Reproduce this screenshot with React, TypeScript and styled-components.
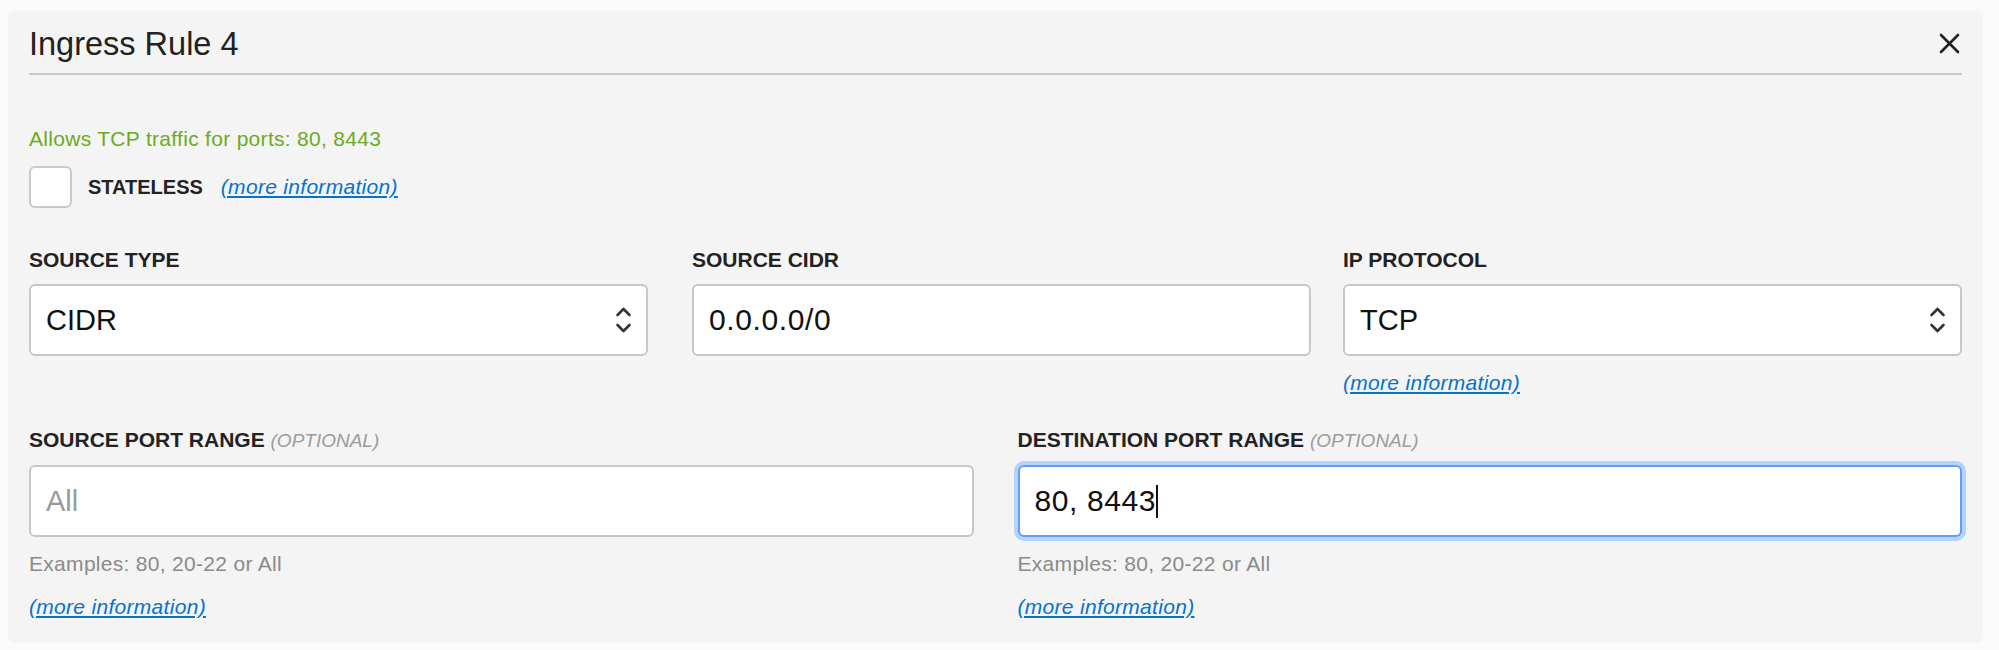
import React from "react";
import styled, { createGlobalStyle, css } from "styled-components";

const GlobalStyle = createGlobalStyle`
  html, body {
    margin: 0;
    padding: 0;
    background: #fafafa;
  }
  body {
    font-family: "Liberation Sans", Arial, Helvetica, sans-serif;
    color: #222;
  }
  * { box-sizing: border-box; }
`;

const Page = styled.div`
  width: 1999px;
  padding: 11px 16px 8px 8px;
`;

const Panel = styled.section`
  background: #f4f4f4;
  border-radius: 6px;
  padding: 0 21px 24px;
`;

const Header = styled.header`
  display: flex;
  align-items: flex-start;
  justify-content: space-between;
  padding: 14px 0 10px;
  border-bottom: 2px solid #c5cad1;
`;

const Title = styled.h2`
  margin: 0;
  font-size: 32.5px;
  line-height: 38px;
  font-weight: 400;
  color: #222;
`;

const CloseButton = styled.button`
  display: flex;
  width: 21px;
  height: 21px;
  margin: 8px 2px 0 0;
  padding: 0;
  border: 0;
  background: none;
  cursor: pointer;
`;

const Status = styled.p`
  margin: 52px 0 0;
  font-size: 21px;
  line-height: 24px;
  letter-spacing: 0.3px;
  color: #6cab20;
`;

const CheckRow = styled.div`
  display: flex;
  align-items: center;
  margin-top: 15px;
`;

const CheckBox = styled.span`
  display: inline-block;
  width: 43px;
  height: 42px;
  background: #fff;
  border: 2px solid #c6cad0;
  border-radius: 6px;
`;

const CheckLabel = styled.span`
  margin: 0 18px 0 16px;
  font-size: 20px;
  line-height: 24px;
  font-weight: 700;
  color: #222;
`;

const MoreLink = styled.a<{ $top?: number }>`
  display: inline-block;
  margin-top: ${(p) => p.$top ?? 0}px;
  font-size: 21px;
  line-height: 24px;
  font-style: italic;
  letter-spacing: 0.3px;
  color: #0572ce;
  text-decoration: underline;
  text-underline-offset: 2px;
  cursor: pointer;
`;

const FieldLink = styled(MoreLink)`
  align-self: flex-start;
`;

const Row = styled.div<{ $top: number; $gap: number }>`
  display: flex;
  align-items: flex-start;
  margin-top: ${(p) => p.$top}px;
  gap: ${(p) => p.$gap}px;
`;

const Field = styled.div<{ $spaceAfter?: number }>`
  flex: 1 1 0;
  min-width: 0;
  display: flex;
  flex-direction: column;
  margin-right: ${(p) => p.$spaceAfter ?? 0}px;
`;

const Label = styled.label`
  display: block;
  margin-bottom: 12px;
  font-size: 21px;
  line-height: 24px;
  font-weight: 700;
  color: #222;
  white-space: nowrap;
`;

const Optional = styled.span`
  font-size: 19px;
  font-weight: 400;
  font-style: italic;
  color: #9c9c9c;
`;

const Box = styled.div<{ $focused?: boolean }>`
  display: flex;
  align-items: center;
  justify-content: space-between;
  height: 72px;
  padding: 0 14px 0 15px;
  background: #fff;
  border: 2px solid #c3c8cf;
  border-radius: 6px;
  font-size: 29px;
  color: #111;
  ${(p) =>
    p.$focused &&
    css`
      border-color: #5f9ff4;
      box-shadow: 0 0 0 4px #b6d4fb;
    `}
`;

const Value = styled.span<{ $placeholder?: boolean; $typed?: boolean }>`
  display: inline-flex;
  align-items: center;
  color: ${(p) => (p.$placeholder ? "#9a9a9a" : "#111")};
  ${(p) =>
    p.$typed &&
    css`
      font-size: 30px;
      letter-spacing: 0.6px;
    `}
`;

const Caret = styled.span`
  display: inline-block;
  width: 2px;
  height: 33px;
  background: #111;
`;

const Hint = styled.p`
  margin: 15px 0 0;
  font-size: 21px;
  line-height: 24px;
  letter-spacing: 0.3px;
  color: #8a8a8a;
`;

const CloseIcon = () => (
  <svg width="21" height="21" viewBox="0 0 21 21" fill="none">
    <path d="M2 2 L19 19 M19 2 L2 19" stroke="#222" strokeWidth="2.6" strokeLinecap="round" />
  </svg>
);

const UpDownIcon = () => (
  <svg width="17" height="30" viewBox="0 0 17 30" fill="none">
    <path
      d="M2.5 10 L8.5 4 L14.5 10 M2.5 20 L8.5 26 L14.5 20"
      stroke="#333"
      strokeWidth="2.6"
      strokeLinecap="round"
      strokeLinejoin="round"
    />
  </svg>
);

const SelectBox = ({ value }: { value: string }) => (
  <Box>
    <Value>{value}</Value>
    <UpDownIcon />
  </Box>
);

export default function App() {
  return (
    <>
      <GlobalStyle />
      <Page>
        <Panel>
          <Header>
            <Title>Ingress Rule 4</Title>
            <CloseButton aria-label="Close">
              <CloseIcon />
            </CloseButton>
          </Header>

          <Status>Allows TCP traffic for ports: 80, 8443</Status>

          <CheckRow>
            <CheckBox role="checkbox" aria-checked="false" />
            <CheckLabel>STATELESS</CheckLabel>
            <MoreLink>(more information)</MoreLink>
          </CheckRow>

          <Row $top={40} $gap={0}>
            <Field $spaceAfter={44}>
              <Label>SOURCE TYPE</Label>
              <SelectBox value="CIDR" />
            </Field>
            <Field $spaceAfter={32}>
              <Label>SOURCE CIDR</Label>
              <Box>
                <Value $typed>0.0.0.0/0</Value>
              </Box>
            </Field>
            <Field>
              <Label>IP PROTOCOL</Label>
              <SelectBox value="TCP" />
              <FieldLink $top={15}>(more information)</FieldLink>
            </Field>
          </Row>

          <Row $top={33} $gap={44}>
            <Field>
              <Label>
                SOURCE PORT RANGE <Optional>(OPTIONAL)</Optional>
              </Label>
              <Box>
                <Value $placeholder>All</Value>
              </Box>
              <Hint>Examples: 80, 20-22 or All</Hint>
              <FieldLink $top={19}>(more information)</FieldLink>
            </Field>
            <Field>
              <Label>
                DESTINATION PORT RANGE <Optional>(OPTIONAL)</Optional>
              </Label>
              <Box $focused>
                <Value $typed>
                  80, 8443
                  <Caret />
                </Value>
              </Box>
              <Hint>Examples: 80, 20-22 or All</Hint>
              <FieldLink $top={19}>(more information)</FieldLink>
            </Field>
          </Row>
        </Panel>
      </Page>
    </>
  );
}
